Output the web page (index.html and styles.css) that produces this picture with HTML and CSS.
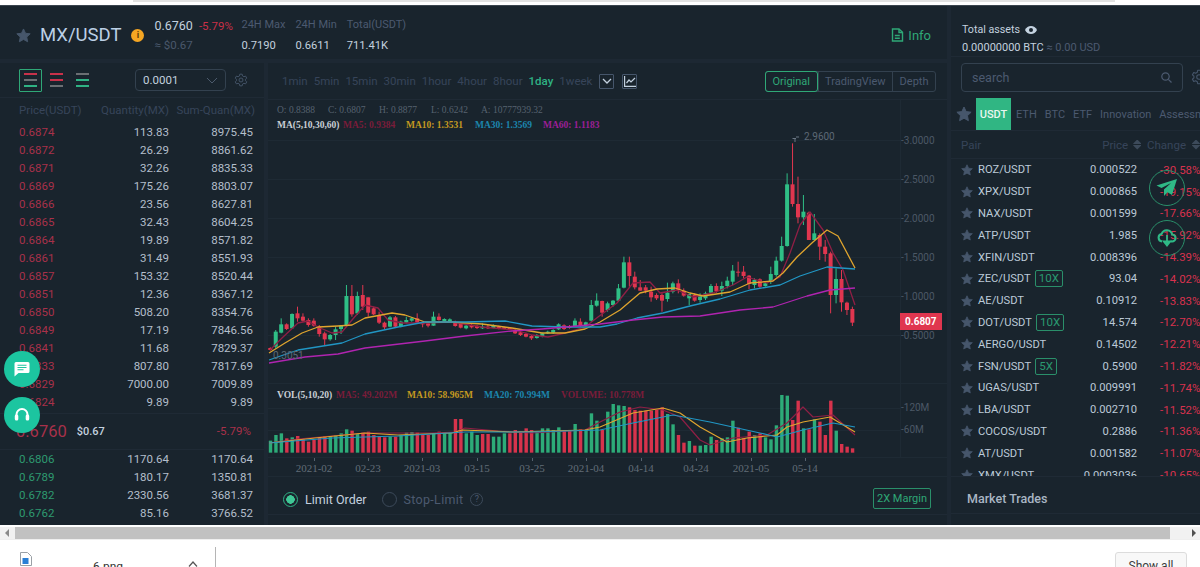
FILE: index.html
```html
<!DOCTYPE html>
<html lang="en">
<head>
    <meta charset="UTF-8">
    <meta name="viewport" content="width=device-width, initial-scale=1.0">
    <title>MX/USDT</title>
    <link rel="stylesheet" href="styles.css">
</head>
<body>

    <svg class="icon-defs" width="0" height="0">
        <symbol id="star" viewBox="0 0 24 24"><path d="M12 1.5l3.2 6.9 7.5.9-5.5 5.2 1.4 7.5-6.6-3.7-6.6 3.7 1.4-7.5L1.3 9.3l7.5-.9z" stroke="currentColor" stroke-width="1.5" stroke-linejoin="round"/></symbol>
        <symbol id="gear" viewBox="0 0 24 24"><path d="M10 2h4l.6 3 2.4 1.4 2.9-1 2 3.4-2.3 2v2.4l2.3 2-2 3.4-2.9-1-2.4 1.4-.6 3h-4l-.6-3L7 17.6l-2.9 1-2-3.4 2.3-2v-2.4l-2.3-2 2-3.4 2.9 1L9.400 5z" fill="none" stroke="currentColor" stroke-width="1.6" stroke-linejoin="round"/><circle cx="12" cy="12" r="3.4" fill="none" stroke="currentColor" stroke-width="1.6"/></symbol>
    </svg>

    <div class="top-strip"><div class="top-strip-tab"></div></div>

    <div class="app">

        <header class="market-head">
            <svg class="head-star"><use href="#star"/></svg>
            <div class="pair-title">MX/USDT</div>
            <div class="pair-info">i</div>
            <div class="head-price">
                <div class="head-price-line"><span class="price-now">0.6760</span><span class="price-change">-5.79%</span></div>
                <div class="price-usd">≈ $0.67</div>
            </div>
            <div class="stat"><span>24H Max</span><b>0.7190</b></div>
            <div class="stat"><span>24H Min</span><b>0.6611</b></div>
            <div class="stat"><span>Total(USDT)</span><b>711.41K</b></div>
            <div class="info-link">
                <svg width="13" height="14" viewBox="0 0 13 14" fill="none" stroke="currentColor" stroke-width="1.4"><path d="M1.500 1h6.500l3.500 3.200V13h-10z"/><path d="M8 1v3.500h3.500M3.800 7.500h5M3.800 10.200h5"/></svg>
                Info
            </div>
        </header>

        <section class="book">
            <div class="book-tools">
                <div class="layout-btn active"><i class="bar-r"></i><i class="bar-n"></i><i class="bar-g"></i></div>
                <div class="layout-btn"><i class="bar-r"></i><i class="bar-r"></i><i class="bar-n"></i></div>
                <div class="layout-btn"><i class="bar-n"></i><i class="bar-g"></i><i class="bar-g"></i></div>
                <div class="depth-select">
                    0.0001
                    <svg width="12" height="7" viewBox="0 0 12 7" fill="none" stroke="currentColor"><path d="M1 1l5 5 5-5"/></svg>
                </div>
                <svg class="book-gear"><use href="#gear"/></svg>
            </div>
            <div class="book-row book-head"><span>Price(USDT)</span><span>Quantity(MX)</span><span>Sum-Quan(MX)</span></div>
            <div class="book-row sell"><span>0.6874</span><span>113.83</span><span>8975.45</span></div>
            <div class="book-row sell"><span>0.6872</span><span>26.29</span><span>8861.62</span></div>
            <div class="book-row sell"><span>0.6871</span><span>32.26</span><span>8835.33</span></div>
            <div class="book-row sell"><span>0.6869</span><span>175.26</span><span>8803.07</span></div>
            <div class="book-row sell"><span>0.6866</span><span>23.56</span><span>8627.81</span></div>
            <div class="book-row sell"><span>0.6865</span><span>32.43</span><span>8604.25</span></div>
            <div class="book-row sell"><span>0.6864</span><span>19.89</span><span>8571.82</span></div>
            <div class="book-row sell"><span>0.6861</span><span>31.49</span><span>8551.93</span></div>
            <div class="book-row sell"><span>0.6857</span><span>153.32</span><span>8520.44</span></div>
            <div class="book-row sell"><span>0.6851</span><span>12.36</span><span>8367.12</span></div>
            <div class="book-row sell"><span>0.6850</span><span>508.20</span><span>8354.76</span></div>
            <div class="book-row sell"><span>0.6849</span><span>17.19</span><span>7846.56</span></div>
            <div class="book-row sell"><span>0.6841</span><span>11.68</span><span>7829.37</span></div>
            <div class="book-row sell"><span>0.6833</span><span>807.80</span><span>7817.69</span></div>
            <div class="book-row sell"><span>0.6829</span><span>7000.00</span><span>7009.89</span></div>
            <div class="book-row sell"><span>0.6824</span><span>9.89</span><span>9.89</span></div>
            <div class="book-mid">
                <span class="mid-price">0.6760</span>
                <span class="mid-usd">$0.67</span>
                <span class="mid-change">-5.79%</span>
            </div>
            <div class="book-row buy"><span>0.6806</span><span>1170.64</span><span>1170.64</span></div>
            <div class="book-row buy"><span>0.6789</span><span>180.17</span><span>1350.81</span></div>
            <div class="book-row buy"><span>0.6782</span><span>2330.56</span><span>3681.37</span></div>
            <div class="book-row buy"><span>0.6762</span><span>85.16</span><span>3766.52</span></div>
        </section>

        <section class="chart-col">
            <div class="chart-tools">
                <span class="interval">1min</span>
                <span class="interval">5min</span>
                <span class="interval">15min</span>
                <span class="interval">30min</span>
                <span class="interval">1hour</span>
                <span class="interval">4hour</span>
                <span class="interval">8hour</span>
                <span class="interval active">1day</span>
                <span class="interval">1week</span>
                <span class="tool-btn"><svg width="10" height="6" viewBox="0 0 10 6" fill="none" stroke="currentColor" stroke-width="1.300"><path d="M1 1l4 4 4-4"/></svg></span>
                <span class="tool-btn"><svg width="12" height="11" viewBox="0 0 12 11" fill="none" stroke="currentColor" stroke-width="1.200"><path d="M.6 0v10.400H12M2.500 7l2.500-3 2 2 4-4"/></svg></span>
                <div class="view-tabs">
                    <span class="view-tab active">Original</span>
                    <span class="view-tab">TradingView</span>
                    <span class="view-tab">Depth</span>
                </div>
            </div>

            <svg class="chart" viewBox="268 100 679 377" width="679" height="377">
                <g class="grid-lines">
                    <path d="M268 140.500H900M268 179.500H900M268 218.500H900M268 257.500H900M268 296.500H900M268 335.500H900"/>
                    <path d="M268 383.500H947M268 408.500H900M268 430.500H900M268 457.500H947M268 476.500H947M900.500 100V457"/>
                </g>
                <text class="t-ohlc" x="277" y="113">O: 0.8388</text>
                <text class="t-ohlc" x="328" y="113">C: 0.6807</text>
                <text class="t-ohlc" x="379" y="113">H: 0.8877</text>
                <text class="t-ohlc" x="431" y="113">L: 0.6242</text>
                <text class="t-ohlc" x="481" y="113">A: 10777939.32</text>
                <text class="t-legend t-white" x="277" y="128">MA(5,10,30,60)</text>
                <text class="t-legend t-red" x="343" y="128">MA5: 0.9384</text>
                <text class="t-legend t-yellow" x="406" y="128">MA10: 1.3531</text>
                <text class="t-legend t-blue" x="475" y="128">MA30: 1.3569</text>
                <text class="t-legend t-purple" x="543" y="128">MA60: 1.1183</text>

                <g id="candles"></g>
                <polyline class="ma ma-red" points="270,350 282,338 298,323 308,321 318,327 332,333 342,332 352,320 365,305 378,308 388,320 402,323 422,323 452,322 482,327 515,330 532,335 548,337 565,333 585,327 598,317 617,303 633,283 650,282 660,293 677,290 693,297 713,293 733,285 747,277 767,283 780,277 790,253 800,225 810,212 823,230 833,253 843,270 855,305"/>
                <polyline class="ma ma-yellow" points="269,353 285,343 302,333 318,327 338,326 352,325 365,318 392,313 405,315 425,322 452,322 482,324 512,328 542,333 565,333 585,329 600,322 620,310 640,293 657,289 675,288 690,293 703,296 730,292 750,283 773,281 783,273 797,257 813,242 827,230 838,236 855,268"/>
                <polyline class="ma ma-blue" points="269,360 298,350 342,343 365,334 398,327 425,322 465,322 505,321 532,326 565,327 600,327 617,324 637,318 663,313 690,306 720,299 750,290 780,285 800,276 827,267 855,269"/>
                <polyline class="ma ma-purple" points="269,363 305,357 338,354 365,348 425,341 465,336 512,331 542,329 600,324 633,320 663,317 700,316 740,310 773,307 807,296 830,290 855,288"/>

                <path class="mark-line" d="M795 138.500v3.500M792.500 138.500H796M796 137h3"/>
                <text class="t-mark" x="804" y="140">2.9600</text>
                <text class="t-mark" x="273" y="359">0.3051</text>

                <text class="t-axis" x="901" y="144">-3.0000</text>
                <text class="t-axis" x="901" y="183">-2.5000</text>
                <text class="t-axis" x="901" y="222">-2.0000</text>
                <text class="t-axis" x="901" y="261">-1.5000</text>
                <text class="t-axis" x="901" y="300">-1.0000</text>
                <text class="t-axis" x="901" y="339">-0.5000</text>
                <rect class="last-tag" x="900" y="313" width="42" height="17"/>
                <text class="last-text" x="905" y="325">0.6807</text>

                <text class="t-legend t-white" x="277" y="398">VOL(5,10,20)</text>
                <text class="t-legend t-red" x="336" y="398">MA5: 49.202M</text>
                <text class="t-legend t-yellow" x="407" y="398">MA10: 58.965M</text>
                <text class="t-legend t-blue" x="484" y="398">MA20: 70.994M</text>
                <text class="t-legend t-red" x="561" y="398">VOLUME: 10.778M</text>

                <g id="volume"></g>
                <polyline class="ma-thin ma-red" points="269,443 298,439 365,433 432,433 455,432 465,428 498,431 532,433 585,430 600,422 620,412 640,407 663,410 680,417 700,440 710,445 733,438 767,435 787,423 803,407 813,417 833,415 855,435"/>
                <polyline class="ma-thin ma-yellow" points="269,443 315,438 365,433 398,435 452,433 462,430 512,432 585,430 600,427 633,413 663,408 680,413 700,427 727,442 747,438 777,435 787,427 803,422 830,417 855,432"/>
                <polyline class="ma-thin ma-blue" points="269,443 332,438 398,436 465,432 532,432 600,430 633,423 673,415 710,422 760,433 777,437 803,430 833,423 855,427"/>

                <text class="t-axis" x="901" y="411">-120M</text>
                <text class="t-axis" x="901" y="433">-60M</text>

                <path class="ticks" d="M314.500 458v3M368.500 458v3M422.500 458v3M477.500 458v3M532.500 458v3M586.500 458v3M641.500 458v3M696.500 458v3M751.500 458v3M805.500 458v3"/>
                <text class="t-time" x="314" y="472">2021-02</text>
                <text class="t-time" x="368" y="472">02-23</text>
                <text class="t-time" x="422" y="472">2021-03</text>
                <text class="t-time" x="477" y="472">03-15</text>
                <text class="t-time" x="532" y="472">03-25</text>
                <text class="t-time" x="586" y="472">2021-04</text>
                <text class="t-time" x="641" y="472">04-14</text>
                <text class="t-time" x="696" y="472">04-24</text>
                <text class="t-time" x="751" y="472">2021-05</text>
                <text class="t-time" x="805" y="472">05-14</text>
            </svg>

            <div class="order-bar">
                <span class="radio on"></span>
                <span class="order-type on">Limit Order</span>
                <span class="radio"></span>
                <span class="order-type">Stop-Limit</span>
                <span class="help">?</span>
                <span class="margin-btn">2X Margin</span>
            </div>
        </section>

        <aside class="markets">
            <div class="assets">
                <div class="assets-title">
                    Total assets
                    <svg width="12" height="8" viewBox="0 0 12 8"><path d="M6 0C3.400 0 1.200 1.600 0 4c1.200 2.400 3.400 4 6 4s4.800-1.600 6-4c-1.200-2.400-3.400-4-6-4z" fill="#c4d2e0"/><circle cx="6" cy="4" r="2" fill="#19242d"/></svg>
                </div>
                <div class="assets-value">0.00000000 BTC <span>≈ 0.00 USD</span></div>
            </div>
            <div class="search-row">
                <div class="search-box">
                    search
                    <svg width="11" height="11" viewBox="0 0 11 11" fill="none" stroke="currentColor" stroke-width="1.200"><circle cx="4.500" cy="4.500" r="3.700"/><path d="M7.300 7.300l3.200 3.200"/></svg>
                </div>
                <svg class="search-gear"><use href="#gear"/></svg>
            </div>
            <div class="market-tabs">
                <svg class="tab-star"><use href="#star"/></svg>
                <span class="market-tab active">USDT</span>
                <span class="market-tab">ETH</span>
                <span class="market-tab">BTC</span>
                <span class="market-tab">ETF</span>
                <span class="market-tab">Innovation</span>
                <span class="market-tab">Assessment</span>
            </div>
            <div class="pair-head">
                <span class="pair-head-name">Pair</span>
                <span class="pair-head-price">Price <i class="sort"></i></span>
                <span class="pair-head-change">Change <i class="sort"></i></span>
            </div>
            <div class="pair-list">
                <div class="pair-row"><svg><use href="#star"/></svg><span class="name">ROZ/USDT</span><span class="last">0.000522</span><span class="change">-30.58%</span></div>
                <div class="pair-row"><svg><use href="#star"/></svg><span class="name">XPX/USDT</span><span class="last">0.000865</span><span class="change">-19.15%</span></div>
                <div class="pair-row"><svg><use href="#star"/></svg><span class="name">NAX/USDT</span><span class="last">0.001599</span><span class="change">-17.66%</span></div>
                <div class="pair-row"><svg><use href="#star"/></svg><span class="name">ATP/USDT</span><span class="last">1.985</span><span class="change">-15.92%</span></div>
                <div class="pair-row"><svg><use href="#star"/></svg><span class="name">XFIN/USDT</span><span class="last">0.008396</span><span class="change">-14.39%</span></div>
                <div class="pair-row"><svg><use href="#star"/></svg><span class="name">ZEC/USDT</span><em>10X</em><span class="last">93.04</span><span class="change">-14.02%</span></div>
                <div class="pair-row"><svg><use href="#star"/></svg><span class="name">AE/USDT</span><span class="last">0.10912</span><span class="change">-13.83%</span></div>
                <div class="pair-row"><svg><use href="#star"/></svg><span class="name">DOT/USDT</span><em>10X</em><span class="last">14.574</span><span class="change">-12.70%</span></div>
                <div class="pair-row"><svg><use href="#star"/></svg><span class="name">AERGO/USDT</span><span class="last">0.14502</span><span class="change">-12.21%</span></div>
                <div class="pair-row"><svg><use href="#star"/></svg><span class="name">FSN/USDT</span><em>5X</em><span class="last">0.5900</span><span class="change">-11.82%</span></div>
                <div class="pair-row"><svg><use href="#star"/></svg><span class="name">UGAS/USDT</span><span class="last">0.009991</span><span class="change">-11.74%</span></div>
                <div class="pair-row"><svg><use href="#star"/></svg><span class="name">LBA/USDT</span><span class="last">0.002710</span><span class="change">-11.52%</span></div>
                <div class="pair-row"><svg><use href="#star"/></svg><span class="name">COCOS/USDT</span><span class="last">0.2886</span><span class="change">-11.36%</span></div>
                <div class="pair-row"><svg><use href="#star"/></svg><span class="name">AT/USDT</span><span class="last">0.001582</span><span class="change">-11.07%</span></div>
                <div class="pair-row"><svg><use href="#star"/></svg><span class="name">XMX/USDT</span><span class="last">0.0003036</span><span class="change">-10.65%</span></div>
            </div>
            <div class="market-trades">Market Trades</div>
        </aside>

        <!-- floating buttons -->
        <div class="float-btn float-chat">
            <svg width="16" height="16" viewBox="0 0 16 16"><path d="M2 1h12a1.500 1.500 0 0 1 1.500 1.500v8A1.500 1.500 0 0 1 14 12H4.500L.5 15.500V2.500A1.500 1.500 0 0 1 2 1z" fill="#fff"/><path d="M3.500 4.200h9M3.500 6.500h9M3.500 8.800h6" stroke="#1cc5a0" stroke-width="1.100"/></svg>
        </div>
        <div class="float-btn float-help">
            <svg width="16" height="16" viewBox="0 0 16 16" fill="none"><path d="M2.500 10V7.500a5.500 5.500 0 0 1 11 0V10" stroke="#fff" stroke-width="2"/><rect x="0.800" y="7.500" width="3.500" height="6" rx="1.500" fill="#fff"/><rect x="11.700" y="7.500" width="3.500" height="6" rx="1.500" fill="#fff"/></svg>
        </div>
        <div class="ring-btn ring-plane">
            <svg width="22" height="20" viewBox="0 0 22 20"><path d="M21 1L0.500 7.500l5 2.500L15 5l-7 6.500V18l3.500-3.800 4.500 2.800z" fill="#2fb986"/></svg>
        </div>
        <div class="ring-btn ring-cloud">
            <svg width="20" height="18" viewBox="0 0 20 18" fill="none"><path d="M5 12.500a3.800 3.800 0 0 1-.4-7.500 5.500 5.500 0 0 1 10.600 0.500 3.500 3.500 0 0 1-.2 7h-1.500" stroke="#2fb986" stroke-width="2"/><path d="M10 6v8M6.800 12.500L10 16.500l3.200-4z" stroke="#2fb986" stroke-width="1.800" fill="#2fb986"/></svg>
        </div>
    </div>

    <div class="h-scroll">
        <span class="arrow-left"></span>
        <div class="h-thumb"></div>
        <span class="arrow-right"></span>
    </div>

    <div class="download-bar">
        <div class="download-item">
            <svg width="12" height="14" viewBox="0 0 12 14"><path d="M.5.5h7l4 4v9h-11z" fill="#fff" stroke="#9aa0a6"/><rect x="2.500" y="6" width="6" height="6" fill="#2a7fd5"/></svg>
            <span class="file-name">6.png</span>
            <svg class="file-caret" width="10" height="6" viewBox="0 0 10 6" fill="none" stroke="#555" stroke-width="1.200"><path d="M1 5.500l4-4.500 4 4.500"/></svg>
        </div>
        <button class="show-all">Show all</button>
    </div>

    <script src="chart.js"></script>

</body>
</html>
```

FILE: styles.css
```css
/* Global Styles */
* {
    box-sizing: border-box;
}

body {
    font-family: Roboto, 'Liberation Sans', sans-serif;
    font-size: 11px;
    background: #fff;
    margin: 0;
    width: 1200px;
    height: 567px;
    overflow: hidden;
}

.icon-defs {
    display: block;
    height: 0;
}

.top-strip {
    height: 6px;
    background: #fff;
    border-bottom: 1px solid #3a444e;
}

.top-strip-tab {
    height: 2px;
    margin: 0 85px 0 133px;
    background: #e2e2e2;
}

.app {
    position: relative;
    height: 519px;
    background: #1d2833;
    display: grid;
    grid-template-columns: 264px 679px 249px;
    grid-template-rows: 53px 462px;
    column-gap: 4px;
    row-gap: 4px;
    overflow: hidden;
}

/* Market header */
.market-head {
    grid-column: 1 / 3;
    background: #19242d;
    display: flex;
    align-items: center;
    padding: 5px 16px 0 16px;
}

.head-star {
    width: 15px;
    height: 15px;
    color: #46566b;
    fill: #46566b;
    margin-right: 9px;
}

.pair-title {
    font-size: 18.500px;
    color: #bcd0e6;
    margin-right: 10px;
}

.pair-info {
    width: 13px;
    height: 13px;
    border-radius: 50%;
    background: #f5a623;
    color: #5a3c05;
    font-size: 9px;
    font-weight: 700;
    line-height: 13px;
    text-align: center;
    margin-right: 10px;
}

.head-price {
    width: 87px;
}

.head-price-line {
    display: flex;
    align-items: baseline;
    gap: 6px;
}

.price-now {
    font-size: 12.500px;
    color: #c3d1df;
}

.price-change {
    font-size: 11.500px;
    color: #c83048;
}

.price-usd {
    margin-top: 5px;
    color: #4a586b;
    font-size: 11.500px;
}

.stat {
    display: flex;
    flex-direction: column;
    gap: 8px;
    margin-right: 10px;
}

.stat span {
    color: #4c5a70;
    font-size: 11px;
}

.stat b {
    font-weight: 400;
    font-size: 11.200px;
    color: #c3d1df;
}

.info-link {
    margin-left: auto;
    display: flex;
    align-items: center;
    gap: 4px;
    font-size: 13px;
    color: #2fa877;
}

/* Order book */
.book {
    background: #19242d;
    overflow: hidden;
}

.book-tools {
    height: 35px;
    display: flex;
    align-items: center;
    padding-left: 19px;
    border-bottom: 1px solid #1f2a35;
}

.layout-btn {
    width: 23px;
    height: 23px;
    margin-right: 3px;
    border: 1px solid transparent;
    border-radius: 1px;
    display: flex;
    flex-direction: column;
    justify-content: center;
    gap: 4px;
    padding: 0 4px;
}

.layout-btn.active {
    border-color: #2fa877;
}

.layout-btn i {
    height: 2px;
    display: block;
}

.bar-r {
    background: #c8314a;
}

.bar-g {
    background: #2fb284;
}

.bar-n {
    background: #6b6f73;
}

.depth-select {
    width: 91px;
    height: 22px;
    margin-left: 38px;
    border: 1px solid #33414f;
    border-radius: 4px;
    display: flex;
    align-items: center;
    justify-content: space-between;
    padding: 0 7px;
    color: #c3d1df;
    font-size: 11.500px;
}

.depth-select svg {
    color: #4c5a6c;
}

.book-gear {
    width: 14px;
    height: 14px;
    margin-left: 8px;
    color: #46566b;
}

.book-row {
    height: 18px;
    display: grid;
    grid-template-columns: 100px 50px 84px;
    padding-left: 19px;
    align-items: center;
    color: #b4bfcb;
    font-size: 11.500px;
}

.book-row span:nth-child(n+2) {
    text-align: right;
}

.book-head {
    height: 24.700px;
    color: #37445a;
    grid-template-columns: 80px 70px 86px;
}

.sell span:first-child {
    color: #a8314a;
}

.buy span:first-child {
    color: #2e9a70;
}

.book-mid {
    height: 37px;
    margin-top: 2px;
    border-top: 1px solid #1f2a35;
    border-bottom: 1px solid #1f2a35;
    display: flex;
    align-items: center;
    padding-left: 16px;
}

.mid-price {
    font-size: 16.500px;
    color: #a8314a;
}

.mid-usd {
    margin-left: 10px;
    font-size: 11px;
    font-weight: 500;
    color: #c3d1df;
}

.mid-change {
    margin-left: 112px;
    font-size: 11.500px;
    color: #a8314a;
}

/* Chart */
.chart-col {
    background: #19242d;
    overflow: hidden;
}

.chart-tools {
    height: 37px;
    display: flex;
    align-items: center;
    padding-left: 14px;
    border-bottom: 1px solid #1f2a35;
    position: relative;
}

.interval {
    font-size: 11.500px;
    color: #37445a;
    margin-right: 6px;
}

.interval.active {
    color: #2fb284;
    font-weight: 500;
}

.tool-btn {
    width: 15px;
    height: 15px;
    margin-right: 8px;
    border: 1px solid #46566b;
    border-radius: 1px;
    display: flex;
    align-items: center;
    justify-content: center;
    color: #c3d1df;
}

.interval + .tool-btn {
    margin-left: 1px;
}

.view-tabs {
    margin-left: auto;
    margin-right: 11px;
    display: flex;
    height: 21px;
    border: 1px solid #33414f;
    border-radius: 3px;
}

.view-tab {
    padding: 0 6.500px;
    line-height: 19px;
    color: #4c5a70;
    font-size: 11px;
    border-left: 1px solid #33414f;
}

.view-tab:first-child {
    border-left: none;
}

.view-tab.active {
    color: #2fa877;
    border: 1px solid #2fa877;
    border-radius: 3px;
    margin: -1px 0 -1px -1px;
    line-height: 19px;
}

.chart {
    display: block;
}

.grid-lines path {
    fill: none;
    stroke: #1e2a34;
}

.t-ohlc {
    font-family: 'Liberation Serif', serif;
    font-size: 9.500px;
    fill: #56626f;
}

.t-legend {
    font-family: 'Liberation Serif', serif;
    font-size: 9.500px;
    font-weight: 700;
}

.t-white {
    fill: #c9cfd6;
}

.t-red {
    fill: #7a1c3a;
}

.t-yellow {
    fill: #c49a20;
}

.t-blue {
    fill: #1c86ad;
}

.t-purple {
    fill: #9c1f96;
}

.ma,
.ma-thin {
    fill: none;
    stroke-linejoin: round;
}

.ma {
    stroke-width: 1.300;
}

.ma-thin {
    stroke-width: 1.200;
}

.ma-red {
    stroke: #8f1f45;
}

.ma-yellow {
    stroke: #e0a52e;
}

.ma-blue {
    stroke: #2196c4;
}

.ma-purple {
    stroke: #b024b0;
}

.mark-line {
    fill: none;
    stroke: #6b7784;
}

.t-mark {
    font-size: 10px;
    fill: #5d6976;
}

.t-axis {
    font-size: 10px;
    fill: #4c5866;
}

.last-tag {
    fill: #e0364f;
}

.last-text {
    font-size: 10px;
    font-weight: 700;
    fill: #fff;
}

.ticks {
    stroke: #56626f;
}

.t-time {
    font-family: 'Liberation Serif', serif;
    font-size: 11px;
    text-anchor: middle;
    fill: #626d78;
}

.order-bar {
    height: 32px;
    margin-top: 6px;
    background: #19242d;
    border-bottom: 1px solid #1f2a35;
    display: flex;
    align-items: center;
    padding: 2px 16px 0 15px;
}

.radio {
    width: 15px;
    height: 15px;
    border-radius: 50%;
    border: 1px solid #3c4a5a;
    margin-right: 7px;
    position: relative;
}

.radio.on {
    border-color: #2fb284;
    background: radial-gradient(circle, #3fc795 0 4px, transparent 4.500px);
}

.order-type {
    font-size: 12.500px;
    letter-spacing: 0.3px;
    color: #4c5a70;
    margin-right: 15px;
}

.order-type.on {
    letter-spacing: 0;
    color: #c3d1df;
}

.help {
    width: 13px;
    height: 13px;
    margin-left: -8px;
    border: 1px solid #3c4a5a;
    border-radius: 50%;
    color: #4c5a70;
    font-size: 9px;
    line-height: 11px;
    text-align: center;
}

.margin-btn {
    margin-left: auto;
    margin-top: -2px;
    height: 21px;
    line-height: 19px;
    padding: 0 3px;
    border: 1px solid #2a8f6a;
    border-radius: 2px;
    color: #2fa877;
    font-size: 11px;
}

/* Market list */
.markets {
    grid-column: 3;
    grid-row: 1 / 3;
    background: #19242d;
    overflow: hidden;
}

.assets {
    height: 51px;
    padding: 17px 0 0 11px;
    border-bottom: 1px solid #1f2a35;
}

.assets-title {
    display: flex;
    align-items: center;
    gap: 5px;
    color: #c3d1df;
    font-size: 10.700px;
}

.assets-value {
    margin-top: 5px;
    font-size: 11px;
    color: #c3d1df;
}

.assets-value span {
    color: #4c5a70;
}

.search-row {
    height: 35px;
    padding: 6px 0 0 10px;
    display: flex;
}

.search-box {
    width: 222px;
    height: 29px;
    border: 1px solid #33414f;
    border-radius: 4px;
    display: flex;
    align-items: center;
    justify-content: space-between;
    padding: 0 10px;
    color: #4c5a70;
    font-size: 12.500px;
    flex-shrink: 0;
}

.search-gear {
    width: 16px;
    height: 16px;
    margin: 6px 0 0 8px;
    color: #46566b;
    flex-shrink: 0;
}

.market-tabs {
    height: 39px;
    padding: 6px 0 0 5px;
    display: flex;
    align-items: stretch;
    border-bottom: 1px solid #1f2a35;
    white-space: nowrap;
}

.tab-star {
    width: 16px;
    height: 16px;
    margin: 8px 4px 0 0;
    color: #46566b;
    fill: #46566b;
    flex-shrink: 0;
}

.market-tab {
    flex: none;
    font-size: 11px;
    color: #4c5a70;
    line-height: 33px;
    margin-right: 8px;
}

.market-tab.active {
    width: 35px;
    margin-right: 5px;
    text-align: center;
    background: #30b683;
    color: #e9f6f0;
    font-weight: 500;
}

.pair-head {
    height: 28px;
    position: relative;
    display: flex;
    align-items: center;
    padding-left: 10px;
    color: #37445a;
    font-size: 11.500px;
    border-bottom: 1px solid #1f2a35;
}

.pair-head-price {
    margin-left: 121px;
    display: flex;
    align-items: center;
    gap: 5px;
    width: 48px;
}

.pair-head-change {
    margin-left: 4px;
    display: flex;
    align-items: center;
    gap: 6px;
    white-space: nowrap;
}

.sort {
    width: 8px;
    height: 10px;
    background: linear-gradient(#3c4a5a 0 45%, transparent 45% 55%, #3c4a5a 55%);
    clip-path: polygon(50% 0, 100% 40%, 100% 45%, 0 45%, 0 40%, 50% 0, 50% 100%, 100% 60%, 100% 55%, 0 55%, 0 60%, 50% 100%);
    flex-shrink: 0;
}

.pair-list {
    height: 318px;
    overflow: hidden;
    border-bottom: 1px solid #1f2a35;
}

.pair-row {
    height: 21.800px;
    display: flex;
    align-items: center;
    padding-left: 10px;
    color: #bccad8;
    font-size: 11.200px;
    white-space: nowrap;
}

.pair-row svg {
    width: 12px;
    height: 12px;
    margin-right: 5px;
    color: #46566b;
    fill: #46566b;
    flex-shrink: 0;
}

.pair-row em {
    font-style: normal;
    margin-left: 4px;
    height: 17px;
    line-height: 15px;
    padding: 0 3px;
    border: 1px solid #2a8f6a;
    border-radius: 2px;
    color: #2a9a70;
    font-size: 11.500px;
}

.last {
    margin-left: auto;
    color: #bccad8;
}

.change {
    width: 40px;
    margin-left: 23px;
    flex-shrink: 0;
    color: #d8324e;
    font-size: 11.500px;
    overflow: visible;
}

.market-trades {
    height: 32px;
    margin-top: 5px;
    padding-left: 16px;
    line-height: 34px;
    font-size: 12.500px;
    font-weight: 500;
    color: #a9b6c4;
    border-bottom: 1px solid #1f2a35;
}

/* Floating buttons */
.float-btn {
    position: absolute;
    left: 4px;
    width: 36px;
    height: 36px;
    border-radius: 50%;
    background: #1cc5a0;
    display: flex;
    align-items: center;
    justify-content: center;
}

.float-chat {
    top: 345px;
}

.float-help {
    top: 391px;
}

.ring-btn {
    position: absolute;
    left: 1149px;
    width: 36px;
    height: 36px;
    border-radius: 50%;
    border: 1px solid #2a8f6a;
    display: flex;
    align-items: center;
    justify-content: center;
}

.ring-plane {
    top: 164px;
}

.ring-cloud {
    top: 214px;
}

/* Browser chrome */
.h-scroll {
    height: 13px;
    margin-top: 1px;
    background: #f1f1f1;
    display: flex;
    align-items: center;
    border-top: 1px solid #fff;
}

.arrow-left {
    width: 15px;
    flex-shrink: 0;
}

.arrow-left::before {
    content: "";
    display: block;
    width: 0;
    margin-left: 5px;
    border: 4px solid transparent;
    border-left: none;
    border-right: 4px solid #8a8a8a;
}

.h-thumb {
    width: 1155px;
    height: 100%;
    background: #c1c1c1;
}

.arrow-right {
    margin-left: 22px;
    border: 4px solid transparent;
    border-right: none;
    border-left: 4px solid #505050;
}

.download-bar {
    height: 40px;
    background: #fff;
    border-top: 1px solid #eee;
    padding: 7px 13px 0 20px;
    display: flex;
    align-items: flex-start;
    justify-content: space-between;
}

.download-item {
    width: 196px;
    height: 40px;
    border-right: 1px solid #b5b5b5;
    display: flex;
    align-items: flex-start;
    padding-top: 5px;
    position: relative;
}

.file-name {
    margin: 8px 0 0 61px;
    font-size: 12px;
    color: #333;
}

.file-caret {
    position: absolute;
    top: 14px;
    left: 168px;
}

.show-all {
    width: 72px;
    height: 34px;
    margin-top: 5px;
    background: #f8f8f8;
    border: 1px solid #dcdcdc;
    border-radius: 3px;
    font-family: Roboto, sans-serif;
    font-size: 12px;
    color: #3c3c3c;
    padding: 0 0 6px 0;
}
```

FILE: chart.js
```js
// y values were read off a 3x grid, the main pane starts at y=130
const X0 = 270.3;
const STEP = 5.44;
const NS = "http://www.w3.org/2000/svg";

// colour, wick top, body top, body bottom, wick bottom
const candles = [
    ["r",652,654,660,662],["g",600,605,650,655],["g",565,583,608,610],["r",580,583,597,600],
    ["g",550,552,595,595],["r",530,550,565,575],["r",550,560,572,575],["r",565,570,585,590],
    ["r",565,572,587,590],["r",585,590,612,620],["r",605,610,628,645],["g",612,615,628,632],
    ["g",590,598,615,630],["g",585,587,597,612],["g",465,498,585,585],["r",465,498,553,560],
    ["g",485,498,550,555],["r",465,495,530,540],["r",502,502,548,560],["r",530,535,553,555],
    ["r",545,555,578,582],["r",575,578,592,598],["g",558,562,590,592],["r",558,562,590,592],
    ["g",572,575,590,592],["g",560,570,578,580],["g",562,565,572,575],["r",550,565,578,580],
    ["r",575,578,583,592],["r",575,580,587,592],["g",545,560,587,587],["r",550,560,570,572],
    ["g",565,567,573,575],["g",565,568,576,578],["r",572,577,588,590],["r",578,582,593,595],
    ["g",585,587,595,598],["r",580,585,592,595],["r",585,588,594,597],["g",580,590,595,597],
    ["r",585,590,595,597],["g",583,588,594,595],["r",587,590,595,598],["r",590,592,597,598],
    ["r",592,594,598,600],["r",597,600,610,612],["r",603,607,615,618],["r",608,612,620,622],
    ["r",615,618,625,630],["g",612,615,624,626],["g",608,610,618,622],["g",602,605,610,612],
    ["g",598,600,608,612],["g",580,583,598,600],["r",583,586,597,600],["r",585,588,594,596],
    ["g",565,572,588,590],["r",565,575,587,590],["g",575,577,585,590],["g",510,525,572,575],
    ["g",490,512,527,530],["r",512,513,548,560],["g",515,520,540,545],["g",510,512,525,530],
    ["g",462,475,512,515],["g",380,397,473,475],["r",380,397,438,470],["r",425,440,472,478],
    ["r",450,472,482,482],["r",465,472,482,490],["r",470,485,502,515],["r",490,495,505,510],
    ["r",490,495,512,545],["g",458,488,507,515],["g",455,460,485,490],["r",448,460,480,490],
    ["r",475,482,497,500],["g",490,492,505,525],["r",490,495,512,515],["g",490,495,510,518],
    ["g",485,490,505,510],["g",462,468,488,495],["r",460,468,484,488],["g",455,468,482,498],
    ["g",440,452,468,475],["g",405,422,455,465],["r",395,425,428,440],["r",408,425,438,445],
    ["r",435,437,462,478],["g",445,450,465,475],["r",445,448,470,475],["g",455,460,468,470],
    ["g",410,432,455,462],["g",380,392,435,440],["g",320,348,392,395],["g",130,163,348,350],
    ["r",40,163,222,230],["r",140,222,262,280],["g",195,245,262,285],["r",245,248,330,330],
    ["g",252,310,330,330],["r",310,315,350,390],["r",330,350,372,395],["r",365,370,495,550],
    ["g",415,447,495,520],["r",420,447,517,545],["r",515,518,540,555],["r",530,537,578,588]
];

// bar tops on the same 3x grid, the volume pane starts at y=380
const volumes = [
    182,165,160,175,172,168,178,185,180,172,168,168,165,160,148,152,162,158,155,165,170,172,170,170,
    165,158,156,158,165,165,160,155,158,158,117,117,160,155,165,162,162,170,170,160,160,150,155,145,
    150,155,145,145,150,142,150,152,132,148,150,100,122,150,95,72,76,78,82,90,92,92,92,90,82,102,133,
    165,188,183,197,197,195,170,180,175,172,122,143,175,155,165,160,172,178,136,45,47,120,62,145,148,
    118,125,165,62,152,192,200,205
];
const volumeGreen = new Set([0,1,2,4,11,12,13,14,16,22,24,25,26,30,32,33,36,37,38,41,42,43,49,50,51,52,53,
    56,58,59,60,62,63,64,65,73,74,77,79,80,81,83,84,85,89,91,92,93,94,95,98,100,104]);

function addRect(parent, x, y, w, h, color) {
    const r = document.createElementNS(NS, "rect");
    r.setAttribute("x", x);
    r.setAttribute("y", y);
    r.setAttribute("width", w);
    r.setAttribute("height", h);
    r.setAttribute("fill", color);
    parent.appendChild(r);
}

const candleGroup = document.getElementById("candles");
candles.forEach((c, i) => {
    const x = X0 + i * STEP;
    const color = c[0] === "g" ? "#2fbf86" : "#e0364f";
    const y = v => 130 + v / 3;
    addRect(candleGroup, x - 0.5, y(c[1]), 1, (c[4] - c[1]) / 3, color);
    addRect(candleGroup, x - 2, y(c[2]), 4, Math.max(c[3] - c[2], 3) / 3, color);
});

const volumeGroup = document.getElementById("volume");
volumes.forEach((top, i) => {
    const x = X0 + i * STEP;
    const color = volumeGreen.has(i) ? "#2dab78" : "#d7334c";
    addRect(volumeGroup, x - 1.5, 380 + top / 3, 3.4, (218 - top) / 3, color);
});
```
